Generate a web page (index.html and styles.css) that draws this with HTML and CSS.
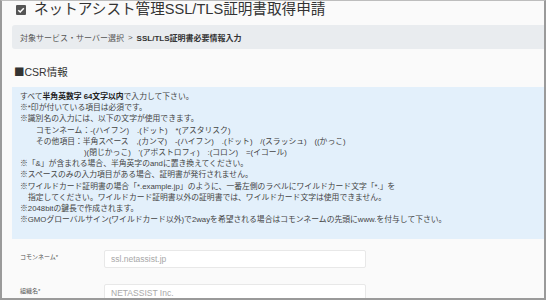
FILE: index.html
```html
<!DOCTYPE html>
<html lang="ja">
<head>
    <meta charset="UTF-8">
    <meta name="viewport" content="width=device-width, initial-scale=1.0">
    <title>ネットアシスト管理SSL/TLS証明書取得申請</title>
    <link rel="stylesheet" href="styles.css">
</head>
<body>
    <div class="frame">
        <h1 class="page-title">
            <span class="check-icon">
                <svg width="10" height="10" viewBox="0 0 10 10"><path d="M2.3 5.2 L4.2 7 L7.8 3.2" fill="none" stroke="#fff" stroke-width="1.5"/></svg>
            </span>
            ネットアシスト管理SSL/TLS証明書取得申請
        </h1>

        <div class="breadcrumb">
            <span>対象サービス・サーバー選択</span>
            <span class="sep">&gt;</span>
            <strong>SSL/TLS証明書必要情報入力</strong>
        </div>

        <h2 class="section-title"><span class="mark">■</span>CSR情報</h2>

        <div class="notice">
            <p>すべて<strong>半角英数字 64文字以内</strong>で入力して下さい。</p>
            <p>※*印が付いている項目は必須です。</p>
            <p>※識別名の入力には、以下の文字が使用できます。</p>
            <p class="indent2">コモンネーム：-(ハイフン)　.(ドット)　*(アスタリスク)</p>
            <p class="indent2">その他項目：半角スペース　,(カンマ)　-(ハイフン)　.(ドット)　/(スラッシュ)　((かっこ)</p>
            <p class="indent-more">)(閉じかっこ)　'(アポストロフィ)　:(コロン)　=(イコール)</p>
            <p>※「&amp;」が含まれる場合、半角英字のandに置き換えてください。</p>
            <p>※スペースのみの入力項目がある場合、証明書が発行されません。</p>
            <p>※ワイルドカード証明書の場合「*.example.jp」のように、一番左側のラベルにワイルドカード文字「*.」を</p>
            <p class="indent1">指定してください。ワイルドカード証明書以外の証明書では、ワイルドカード文字は使用できません。</p>
            <p>※2048bitの鍵長で作成されます。</p>
            <p>※GMOグローバルサイン(ワイルドカード以外)で2wayを希望される場合はコモンネームの先頭にwww.を付与して下さい。</p>
        </div>

        <div class="form-row">
            <label for="commonName">コモンネーム*</label>
            <input type="text" id="commonName" placeholder="ssl.netassist.jp">
        </div>
        <div class="form-row">
            <label for="orgName">組織名*</label>
            <input type="text" id="orgName" placeholder="NETASSIST Inc.">
        </div>
    </div>
</body>
</html>
```

FILE: styles.css
```css
html, body {
    margin: 0;
    padding: 0;
    background-color: #fafafa;
}
body {
    font-family: "Liberation Sans", "Noto Sans CJK JP", sans-serif;
    color: #333;
}
.frame {
    box-sizing: border-box;
    width: 546px;
    height: 300px;
    overflow: hidden;
    border: 2px solid #9a9a9a;
    border-top: 1px solid #bdbdbd;
    padding-left: 10px;
}
.page-title {
    margin: 0;
    padding-left: 4px;
    font-size: 14.6px;
    line-height: 17px;
    font-weight: normal;
    color: #333;
    display: flex;
    align-items: center;
    gap: 8px;
}
.check-icon {
    display: inline-block;
    width: 10px;
    height: 10px;
    background-color: #555;
    border-radius: 1px;
    margin-top: 1px;
}
.check-icon svg {
    display: block;
}
.breadcrumb {
    margin-top: 7px;
    height: 24px;
    display: flex;
    align-items: center;
    gap: 4px;
    padding-left: 8px;
    background-color: #e9ecef;
    border-radius: 3px 0 0 3px;
    font-size: 8px;
    color: #555;
}
.breadcrumb strong {
    color: #333;
}
.section-title {
    margin: 16px 0 0 2px;
    font-size: 10.5px;
    line-height: 14px;
    font-weight: normal;
    color: #333;
}
.section-title .mark {
    font-family: "Noto Sans CJK JP", sans-serif;
}
.notice {
    margin-top: 8px;
    padding: 4px 0 14px 8px;
    background-color: #e3f0fb;
    font-size: 7.8px;
    line-height: 11.2px;
    color: #444;
}
.notice p {
    margin: 0;
    white-space: nowrap;
}
.notice strong {
    color: #222;
}
.notice .indent1 {
    padding-left: 8px;
}
.notice .indent2 {
    padding-left: 16px;
}
.notice .indent-more {
    padding-left: 64px;
}
.form-row {
    display: flex;
    align-items: flex-start;
    margin-top: 11px;
    padding-left: 8px;
}
.form-row + .form-row {
    margin-top: 16px;
}
.form-row label {
    width: 84px;
    padding-top: 2px;
    font-size: 6px;
    line-height: 10px;
    color: #555;
}
.form-row input {
    box-sizing: border-box;
    width: 262px;
    height: 18px;
    margin: 0;
    padding: 0 6px;
    border: 1px solid #e8e8e8;
    border-radius: 2px;
    background-color: #fff;
    font-family: "Liberation Sans", "Noto Sans CJK JP", sans-serif;
    font-size: 8.5px;
    color: #333;
}
.form-row input::placeholder {
    color: #a8a8a8;
}
```
